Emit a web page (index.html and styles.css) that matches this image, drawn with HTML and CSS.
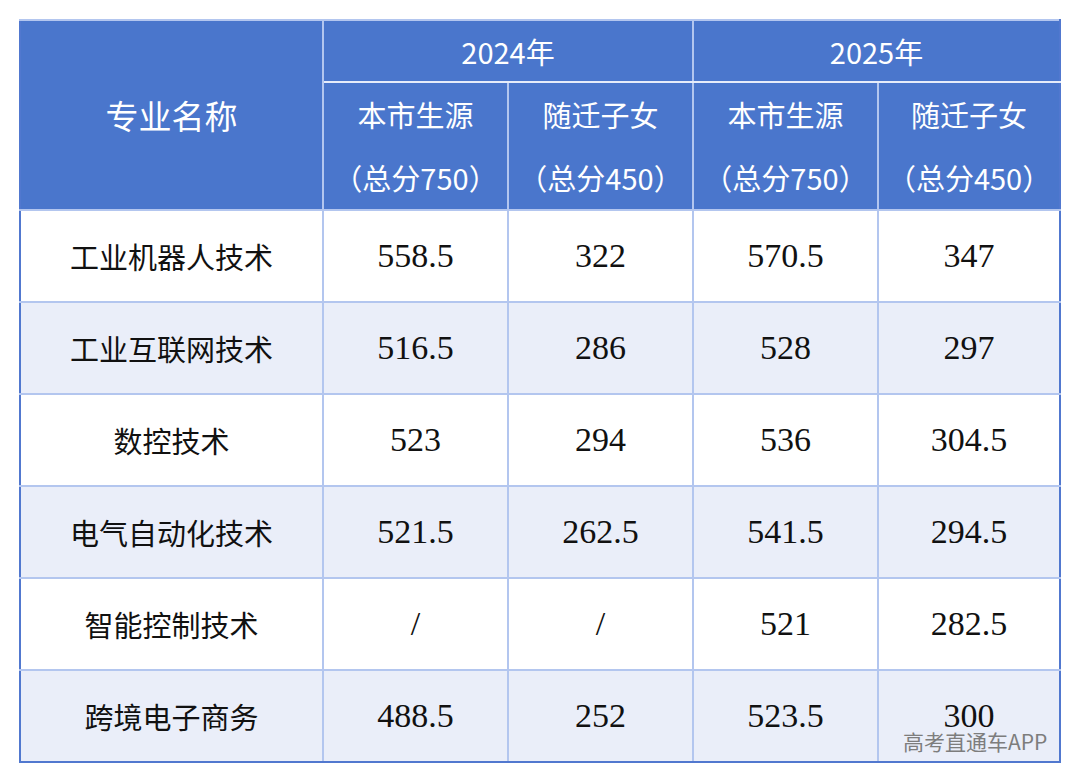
FILE: index.html
```html
<!DOCTYPE html>
<html lang="zh-CN">
<head>
<meta charset="utf-8">
<title>专业分数线</title>
<link rel="stylesheet" href="styles.css">
</head>
<body>
<div class="wrap">
<table class="score">
  <colgroup>
    <col class="c-name"><col class="c-val"><col class="c-val"><col class="c-val"><col class="c-last">
  </colgroup>
  <thead>
    <tr class="h1">
      <th rowspan="2" class="name-h">专业名称</th>
      <th colspan="2" class="year">2024年</th>
      <th colspan="2" class="year">2025年</th>
    </tr>
    <tr class="h2">
      <th><span class="l">本市生源</span><span class="l">（总分750）</span></th>
      <th><span class="l">随迁子女</span><span class="l">（总分450）</span></th>
      <th><span class="l">本市生源</span><span class="l">（总分750）</span></th>
      <th><span class="l">随迁子女</span><span class="l">（总分450）</span></th>
    </tr>
  </thead>
  <tbody>
    <tr><td class="nm">工业机器人技术</td><td>558.5</td><td>322</td><td>570.5</td><td>347</td></tr>
    <tr class="alt"><td class="nm">工业互联网技术</td><td>516.5</td><td>286</td><td>528</td><td>297</td></tr>
    <tr><td class="nm">数控技术</td><td>523</td><td>294</td><td>536</td><td>304.5</td></tr>
    <tr class="alt"><td class="nm">电气自动化技术</td><td>521.5</td><td>262.5</td><td>541.5</td><td>294.5</td></tr>
    <tr><td class="nm">智能控制技术</td><td>/</td><td>/</td><td>521</td><td>282.5</td></tr>
    <tr class="alt"><td class="nm">跨境电子商务</td><td>488.5</td><td>252</td><td>523.5</td><td>300</td></tr>
  </tbody>
</table>
<div class="mark">高考直通车APP</div>
</div>
</body>
</html>
```
FILE: styles.css
```css
html, body {
  margin: 0;
  padding: 0;
  background: #ffffff;
}
.wrap {
  position: relative;
  width: 1080px;
  height: 781px;
  padding: 19px 0 0 19px;
  box-sizing: border-box;
}
.score {
  border-collapse: collapse;
  table-layout: fixed;
  width: 1040px;
  border: 2px solid #5178cf;
}
.c-name { width: 303px; }
.c-val { width: 185px; }
.c-last { width: 182px; }
.score th {
  background: #4a76cc;
  color: #ffffff;
  font-family: "Noto Sans CJK SC", "Noto Sans", sans-serif;
  font-weight: 400;
  text-align: center;
  vertical-align: middle;
  padding: 0;
  border: 2px solid #b3c6ef;
}
.h1 th { height: 60px; font-size: 29px; }
.h1 .year { border-bottom-color: #e6ecfa; border-top-color: #b3c6ef; }
.h1 .name-h { font-size: 33px; border-left-color: #5178cf; }
.h2 th { height: 126px; font-size: 29px; }
.h2 .l { display: block; line-height: 63px; }
.score td {
  height: 90px;
  padding: 0;
  text-align: center;
  vertical-align: middle;
  border: 2px solid #b3c6ef;
  font-family: "Liberation Serif", "Noto Sans CJK SC", serif;
  font-size: 34px;
  color: #111111;
  background: #ffffff;
}
.score td.nm {
  font-family: "Noto Sans CJK SC", sans-serif;
  font-size: 29px;
  font-weight: 400;
}
.score tr.alt td { background: #eaeef9; }
.score tr td:first-child { border-left-color: #5178cf; }
.score tr td:last-child, .score tr th:last-child { border-right-color: #5178cf; }
.score tbody tr:last-child td { border-bottom-color: #5178cf; }
.mark {
  position: absolute;
  left: 903px;
  top: 727px;
  font-family: "Noto Sans CJK SC", "Noto Sans", sans-serif;
  font-size: 21px;
  line-height: 28px;
  color: #7d7d7d;
}
```
